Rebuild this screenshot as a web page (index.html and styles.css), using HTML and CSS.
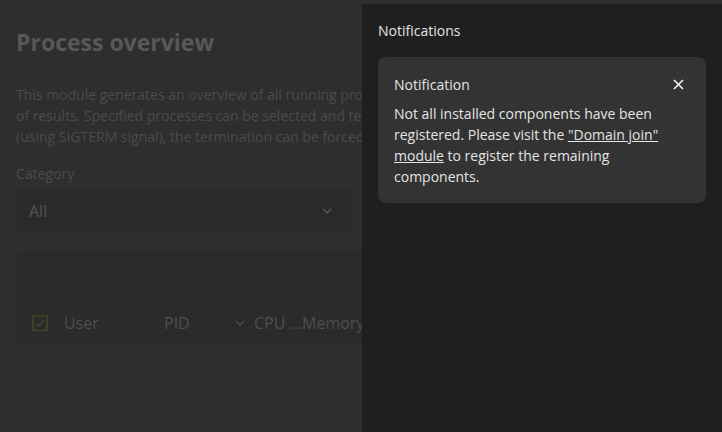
FILE: index.html
```html
<!DOCTYPE html>
<html>
<head>
<meta charset="utf-8">
<link rel="stylesheet" href="styles.css">
</head>
<body>
<main class="page">
  <h1 class="title">Process overview</h1>
  <p class="desc">This module generates an overview of all running processes. The search mask can reduce the number<br>of results. Specified processes can be selected and terminated. If a process can't be terminated normally<br>(using SIGTERM signal), the termination can be forced (using SIGKILL signal).</p>
  <div class="form">
    <div class="field">
      <label class="label">Category</label>
      <div class="select"><span>All</span>
        <svg class="chev" width="12" height="8" viewBox="0 0 12 8"><path d="M2 2 L6 6 L10 2" fill="none" stroke="currentColor" stroke-width="1.4"/></svg>
      </div>
    </div>
    <div class="field">
      <label class="label">Search</label>
      <div class="select"><span></span></div>
    </div>
  </div>
  <div class="table">
    <div class="toolbar"></div>
    <div class="head">
      <span class="check"><svg width="16" height="16" viewBox="0 0 16 16"><rect x="0.75" y="0.75" width="14.5" height="14.5" fill="none" stroke="currentColor" stroke-width="1.5"/><path d="M4 8 L7 11 L12 5" fill="none" stroke="currentColor" stroke-width="1.4"/></svg></span>
      <span class="col user">User</span>
      <span class="col pid">PID</span>
      <svg class="sortchev" width="10" height="8" viewBox="0 0 10 8"><path d="M1.5 2.5 L5 6 L8.5 2.5" fill="none" stroke="currentColor" stroke-width="1.4"/></svg>
      <span class="col cpu">CPU …</span><span class="col mem">Memory</span>
      <span class="col cmd">Command</span>
    </div>
  </div>
</main>
<aside class="panel">
  <div class="panel-title">Notifications</div>
  <div class="card">
    <div class="card-head">
      <span>Notification</span>
      <svg class="close" width="11" height="11" viewBox="0 0 11 11"><path d="M1 1 L10 10 M10 1 L1 10" stroke="currentColor" stroke-width="1.7"/></svg>
    </div>
    <p class="card-text">Not all installed components have been registered. Please visit the <a href="#">"Domain join" module</a> to register the remaining components.</p>
  </div>
</aside>
</body>
</html>
```
FILE: styles.css
```css
* { box-sizing: border-box; }
html, body { margin: 0; height: 100%; }
body {
  background: #2e2e2e;
  font-family: "Open Sans", "Noto Sans", sans-serif;
  font-size: 14px;
  line-height: 21px;
  overflow: hidden;
  position: relative;
}
.page { padding: 24px 16px 0 16px; width: 722px; }
.title {
  margin: 0;
  font-size: 23px;
  line-height: 36px;
  font-weight: 700;
  color: #585858;
}
.desc {
  margin: 24px 0 0 0;
  color: #4b4b4b;
  white-space: nowrap;
}
.form {
  display: grid;
  grid-template-columns: 337px 337px;
  gap: 16px;
  margin-top: 16px;
}
.label { display: block; color: #4b4b4b; height: 26px; }
.select {
  height: 44px;
  background: #2a2a2a;
  border-radius: 5px;
  display: flex;
  align-items: center;
  justify-content: space-between;
  padding: 0 20px 0 13px;
  color: #555;
  font-size: 16px;
}
.chev { color: #585858; }
.table {
  margin-top: 18px;
  width: 690px;
  background: #2b2b2b;
  border-radius: 6px;
}
.toolbar { height: 51px; border-bottom: 1px solid #303030; }
.head {
  height: 42px;
  display: flex;
  align-items: center;
  color: #4e4e4e;
  font-size: 16px;
}
.check { width: 48px; padding-left: 16px; display: flex; color: #3d4725; }
.col { display: inline-block; }
.user { width: 100px; }
.pid { width: 71px; }
.sortchev { color: #4e4e4e; margin-right: 9px; }
.cpu { width: 48px; }
.mem { width: 80px; }
.panel {
  position: absolute;
  top: 4px;
  right: 0;
  width: 360px;
  bottom: 0;
  background: #1f1f1f;
  padding: 16px;
  color: #e4e4e4;
}
.panel-title { line-height: 21px; margin-top: 0; }
.card {
  margin-top: 16px;
  background: #333333;
  border-radius: 8px;
  padding: 16px;
  width: 328px;
}
.card-head {
  display: flex;
  justify-content: space-between;
  align-items: center;
  padding-right: 6px;
  height: 21px;
  margin-top: 1px;
}
.close { color: #f0f0f0; }
.card-text { margin: 8px 0 0 0; color: #e4e4e4; }
.card-text a { color: #e4e4e4; text-decoration: underline; }
```
